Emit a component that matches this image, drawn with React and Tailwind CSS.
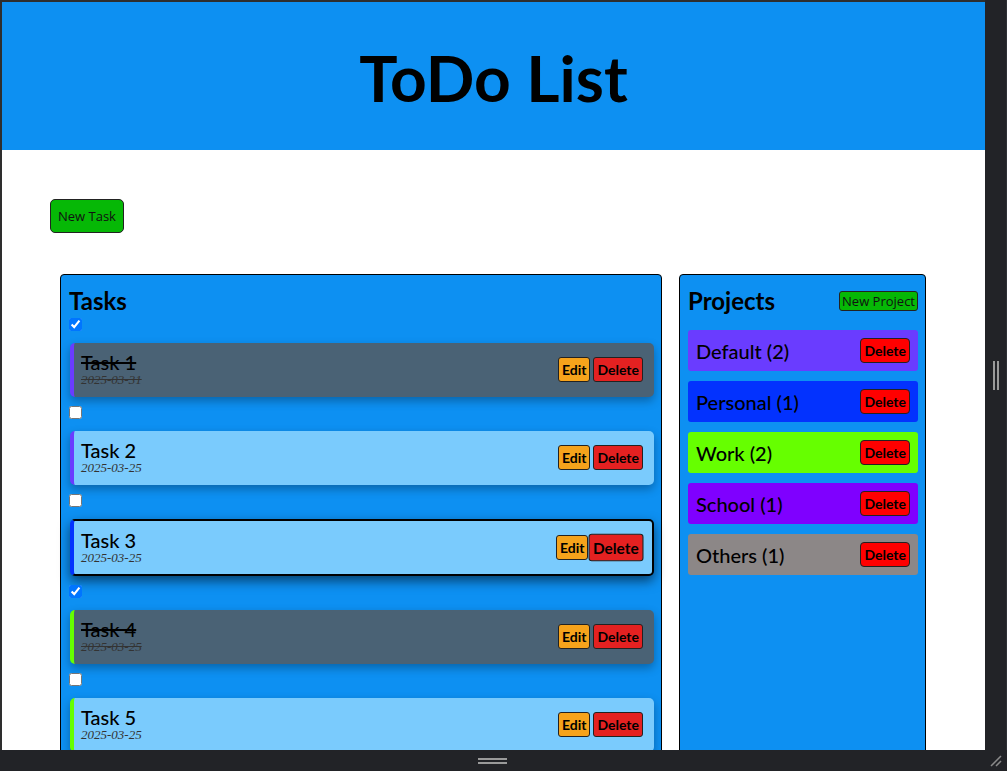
import React from 'react';

const tasks = [
  { id: 1, title: 'Task 1', date: '2025-03-31', done: true, border: 'border-l-[#6a3cff]' },
  { id: 2, title: 'Task 2', date: '2025-03-25', done: false, border: 'border-l-[#6a3cff]' },
  { id: 3, title: 'Task 3', date: '2025-03-25', done: false, border: 'border-l-[#0332fe]', selected: true },
  { id: 4, title: 'Task 4', date: '2025-03-25', done: true, border: 'border-l-[#66ff00]' },
  { id: 5, title: 'Task 5', date: '2025-03-25', done: false, border: 'border-l-[#66ff00]' },
  { id: 6, title: 'Task 6', date: '2025-03-25', done: false, border: 'border-l-[#7f00ff]' },
  { id: 7, title: 'Task 7', date: '2025-03-25', done: false, border: 'border-l-[#8c8787]' },
];

const projects = [
  { name: 'Default', count: 2, bg: 'bg-[#6a3cff]' },
  { name: 'Personal', count: 1, bg: 'bg-[#0332fe]' },
  { name: 'Work', count: 2, bg: 'bg-[#66ff00]' },
  { name: 'School', count: 1, bg: 'bg-[#7f00ff]' },
  { name: 'Others', count: 1, bg: 'bg-[#8c8787]' },
];

const TaskCard = ({ task }) => {
  const bg = task.done ? 'bg-[#4a6275]' : 'bg-[#7acbfd]';
  const frame = task.selected
    ? 'border-2 border-black pt-2 pb-[9px] shadow-[0_5px_12px_rgba(0,0,0,0.55)]'
    : 'pt-2 pb-[10px] shadow-[0_4px_10px_rgba(0,0,0,0.3)]';
  return (
    <div className={`ml-px -mr-px mt-3 flex items-center justify-between rounded-[5px] border-l-4 ${task.border} ${bg} ${frame} pl-[7px] pr-[11px]`}>
      <div>
        <div className={`text-[20px] leading-[22px] font-medium text-black ${task.done ? 'line-through' : ''}`}>
          {task.title}
        </div>
        <div className={`font-['Liberation_Serif',serif] italic text-[13px] leading-[14px] text-[#333] ${task.done ? 'line-through' : ''}`}>
          {task.date}
        </div>
      </div>
      <div className="flex items-center gap-[3px]">
        <button className="rounded-[3px] border border-[#222] bg-[#f6a31b] px-[3px] py-[3px] text-[14px] leading-[17px] font-bold text-black">
          Edit
        </button>
        <button className={`rounded-[3px] border border-[#222] bg-[#e42121] px-[3px] py-[3px] text-[14px] leading-[17px] font-bold text-black ${task.selected ? 'scale-110' : ''}`}>
          Delete
        </button>
      </div>
    </div>
  );
};

const App = () => {
  return (
    <div className="w-[1007px] h-[771px] bg-[#222327] flex flex-col overflow-hidden font-['Lato',sans-serif]">
      <div className="flex h-[750px]">
        <div className="w-[985px] h-full pl-[2px] pt-[2px] bg-[#2e2e2e]">
          <div className="h-full bg-white overflow-hidden">
            {/* Header */}
            <header className="h-[148px] bg-[#0d90f2] flex items-center justify-center pt-[3px]">
              <h1 className="text-[64px] font-bold text-black">ToDo List</h1>
            </header>

            <div className="pl-[48px] pt-[49px]">
              <button className="h-[34px] px-[7px] pt-[2px] rounded-[5px] border border-[#222] bg-[#06b806] text-[13px] font-['Open_Sans',sans-serif] text-[#111]">
                New Task
              </button>
            </div>

            <div className="mt-[41px] pl-[58px] flex gap-[17px]">
              {/* Tasks panel */}
              <section className="w-[602px] rounded-[4px] border border-black bg-[#0d90f2] pl-2 pr-2 pt-[11px] pb-6">
                <h2 className="text-[24px] leading-[30px] font-bold text-black">Tasks</h2>
                {tasks.map((task, i) => (
                  <div key={task.id}>
                    <input
                      type="checkbox"
                      defaultChecked={task.done}
                      className={`block w-[13px] h-[13px] ${i === 0 ? 'mt-[2px]' : 'mt-[9px]'}`}
                    />
                    <TaskCard task={task} />
                  </div>
                ))}
              </section>

              {/* Projects panel */}
              <section className="w-[247px] rounded-[4px] border border-black bg-[#0d90f2] pl-2 pr-[7px] pt-[11px]">
                <div className="flex items-center justify-between">
                  <h2 className="text-[24px] leading-[30px] font-bold text-black">Projects</h2>
                  <button className="h-[20px] px-[2px] rounded-[3px] border border-[#222] bg-[#06b806] text-[13px] leading-[18px] font-['Open_Sans',sans-serif] text-[#111]">
                    New Project
                  </button>
                </div>
                <div className="mt-[14px] flex flex-col gap-[10px]">
                  {projects.map((p) => (
                    <div key={p.name} className={`h-[41px] flex items-center justify-between rounded-[3px] ${p.bg} pl-2 pr-2`}>
                      <span className="text-[20px] font-medium text-black">
                        {p.name} ({p.count})
                      </span>
                      <button className="rounded-[4px] border border-[#222] bg-[#ff0000] px-[3px] py-[3px] text-[14px] leading-[17px] font-bold text-black">
                        Delete
                      </button>
                    </div>
                  ))}
                </div>
              </section>
            </div>
          </div>
        </div>

        {/* Right resize strip */}
        <div className="flex-1 flex items-center justify-center border-r border-[#2e3036]">
          <div className="flex gap-[2px] h-[29px]">
            <div className="w-[2px] bg-[#9a9a9a]" />
            <div className="w-[2px] bg-[#9a9a9a]" />
          </div>
        </div>
      </div>

      {/* Bottom resize strip */}
      <div className="h-[21px] flex items-center">
        <div className="w-[985px] flex justify-center">
          <div className="flex flex-col gap-[2px] w-[29px]">
            <div className="h-[2px] bg-[#9a9a9a]" />
            <div className="h-[2px] bg-[#9a9a9a]" />
          </div>
        </div>
        <div className="flex-1 flex justify-end pr-[4px]">
          <svg width="14" height="13" viewBox="0 0 14 13">
            <path d="M2 12 L12 2" stroke="#8a8a8a" strokeWidth="1.5" />
            <path d="M7 12 L12 7" stroke="#8a8a8a" strokeWidth="1.5" />
          </svg>
        </div>
      </div>
    </div>
  );
};

export default App;
